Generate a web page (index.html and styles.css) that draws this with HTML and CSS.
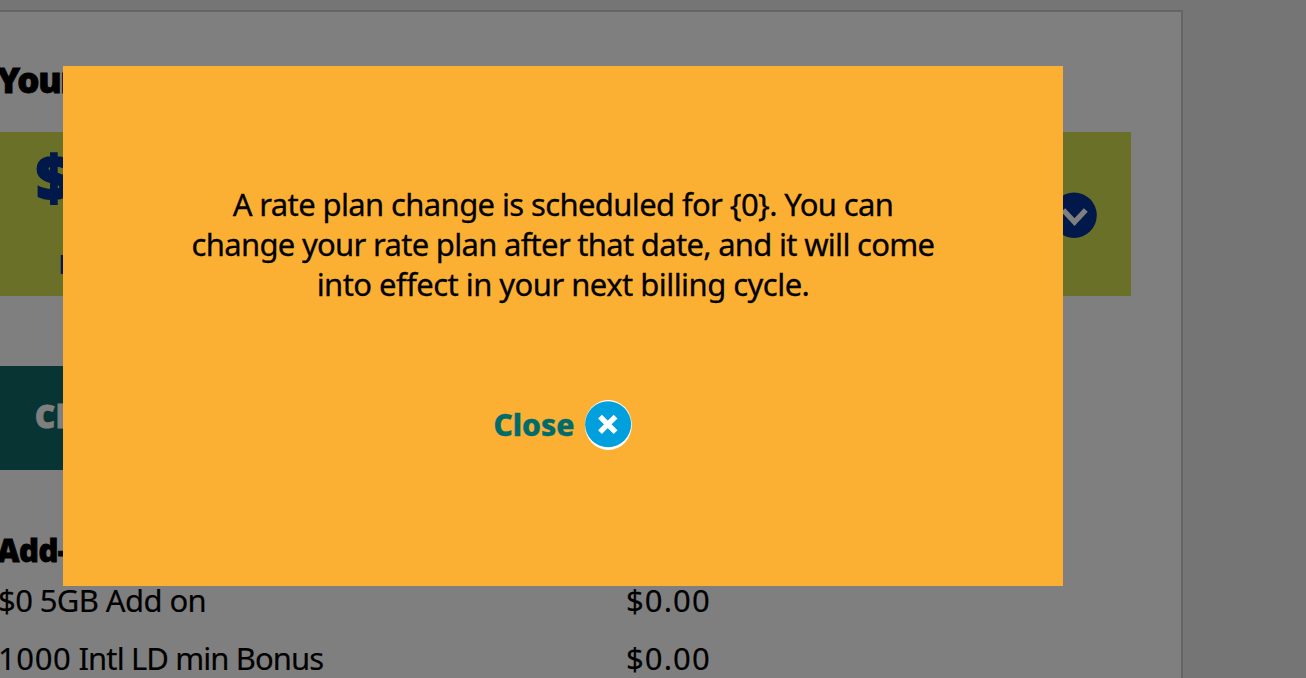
FILE: index.html
```html
<!DOCTYPE html>
<html lang="en">
<head>
  <meta charset="utf-8">
  <title>Your plan</title>
  <link rel="stylesheet" href="styles.css">
</head>
<body>

  <div class="panel">
    <h1 class="panel-title">Your</h1>

    <div class="plan">
      <div class="plan-price">
        <span class="price">$</span>
        <span class="period">l</span>
      </div>
      <svg class="plan-toggle" width="46" height="46" viewBox="0 0 46 46">
        <circle cx="23" cy="23.2" r="22.8" fill="#003294"/>
        <path d="M12.2 18 L23.5 30 L34.8 18" fill="none" stroke="#fff" stroke-width="5.4"/>
      </svg>
    </div>

    <div class="change-btn">Ch</div>

    <h2 class="addons-title">Add-</h2>
    <div class="addon">
      <span class="addon-name addon-data">$0 5GB Add on</span>
      <span class="addon-price">$0.00</span>
    </div>
    <div class="addon">
      <span class="addon-name"><span class="minutes">1000</span> Intl LD min Bonus</span>
      <span class="addon-price">$0.00</span>
    </div>
  </div>

  <div class="overlay">
    <div class="modal">
      <p class="message">
        <span class="line line-1">A rate plan change is scheduled for {0}. You can</span>
        <span class="line line-2">change your rate plan after that date, and it will come</span>
        <span class="line line-3">into effect in your next billing cycle.</span>
      </p>
      <div class="close">
        <span class="close-text">Close</span>
        <svg class="close-icon" width="48" height="50" viewBox="0 0 48 50">
          <ellipse cx="23.3" cy="25" rx="23.5" ry="25" fill="#fff"/>
          <circle cx="23.1" cy="24.2" r="23" fill="#00a0df"/>
          <path d="M15 16.6 L30.6 32.2 M30.6 16.6 L15 32.2" fill="none" stroke="#fff" stroke-width="5.4"/>
        </svg>
      </div>
    </div>
  </div>

</body>
</html>
```

FILE: styles.css
```css
* {
  box-sizing: border-box;
}

body {
  margin: 0;
  height: 678px;
  overflow: hidden;
  background: #ebebeb;
  color: #000;
  font-family: "Noto Sans", "Open Sans", sans-serif;
  font-size: 31px;
}

/* The panel runs off the left edge of the window */
.panel {
  width: 1237px;
  height: 668px;
  margin: 10px 0 0 -54px;
  padding: 40px 50px 0;
  border: 2px solid #cacaca;
  border-bottom: none;
  background: #fff;
  overflow: hidden;
}

.panel-title {
  margin: 0 0 0 -1px;
  height: 80px;
  line-height: 55px;
  font-size: 35px;
  font-weight: 900;
  letter-spacing: -1.3px;
  -webkit-text-stroke: 0.8px #000;
}

.plan {
  display: flex;
  justify-content: space-between;
  align-items: center;
  height: 164px;
  padding: 2px 34px 0 38px;
  background: #d4e04e;
  color: #003294;
}

.plan-price {
  display: flex;
  flex-direction: column;
  height: 164px;
  padding-top: 7px;
}

.price {
  line-height: 72px;
  font-size: 62px;
  font-weight: 900;
  -webkit-text-stroke: 2px #003294;
}

.period {
  margin: 32px 0 0 23px;
  line-height: 40px;
  font-size: 25px;
  font-weight: 900;
}

.change-btn {
  width: 420px;
  height: 104px;
  margin-top: 70px;
  padding-left: 37px;
  background: #106868;
  color: #fff;
  line-height: 101px;
  font-size: 31px;
  font-weight: 900;
  letter-spacing: 0.8px;
  -webkit-text-stroke: 1px #fff;
}

.addons-title {
  margin: 60px 0 0 -1px;
  line-height: 41px;
  font-size: 31px;
  font-weight: 900;
  letter-spacing: -0.5px;
  -webkit-text-stroke: 0.8px #000;
}

.addon {
  display: flex;
  height: 58px;
  line-height: 58px;
  -webkit-text-stroke: 0.2px #000;
}

.addon-name {
  width: 628px;
  white-space: nowrap;
  letter-spacing: -0.9px;
}

.addon-data {
  letter-spacing: -0.6px;
}

.minutes {
  letter-spacing: 0.6px;
}

.addon-price {
  letter-spacing: 1.1px;
}

.overlay {
  position: fixed;
  top: 0;
  left: 0;
  width: 100%;
  height: 100%;
  padding: 66px 0 0 63px;
  background: rgba(0, 0, 0, 0.5);
}

.modal {
  width: 1000px;
  height: 520px;
  padding-top: 118px;
  background: #fbb034;
  text-align: center;
}

.message {
  margin: 0;
  line-height: 40px;
  -webkit-text-stroke: 0.3px #000;
}

.line {
  display: block;
  white-space: nowrap;
}

.line-1 {
  letter-spacing: -0.62px;
}

.line-2 {
  letter-spacing: -0.7px;
}

.line-3 {
  letter-spacing: -0.54px;
}

.close {
  display: flex;
  justify-content: center;
  align-items: center;
  gap: 10px;
  margin-top: 96px;
  height: 50px;
}

.close-text {
  padding-bottom: 2px;
  color: #006b6b;
  font-size: 30px;
  font-weight: 800;
  -webkit-text-stroke: 0.4px #006b6b;
}
```
